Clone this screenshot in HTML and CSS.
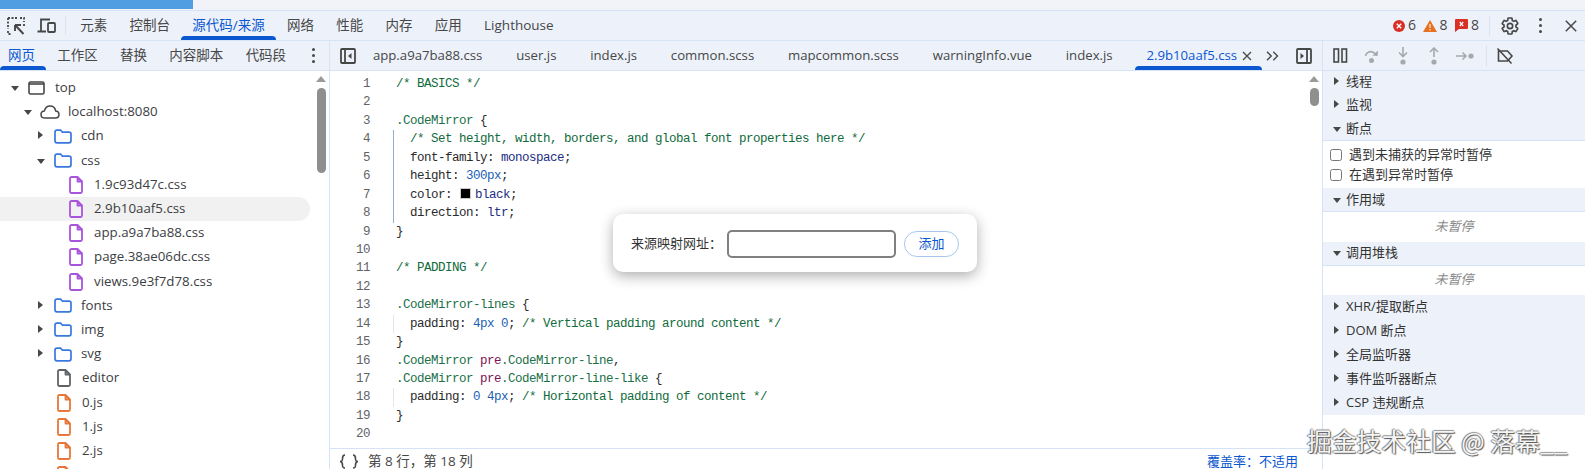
FILE: index.html
```html
<!DOCTYPE html>
<html lang="zh-CN">
<head>
<meta charset="utf-8">
<title>DevTools</title>
<link rel="stylesheet" href="styles.css">
</head>
<body>
<svg class="defs" width="0" height="0" aria-hidden="true">
  <symbol id="folder" viewBox="0 0 18 15"><path d="M1 3.2C1 2 1.8 1.2 3 1.2h3.6l1.8 2H15c1.2 0 2 .8 2 2v6.6c0 1.2-.8 2-2 2H3c-1.2 0-2-.8-2-2z" fill="none" stroke="#3a78e0" stroke-width="1.7"/></symbol>
  <symbol id="file" viewBox="0 0 14 18"><path d="M1 2.5C1 1.6 1.6 1 2.5 1H8.500L13 5.500V15.500C13 16.400 12.400 17 11.500 17H2.500C1.600 17 1 16.400 1 15.500Z M8.500 1V5.500H13" fill="none" stroke="currentColor" stroke-width="1.8" stroke-linejoin="round"/></symbol>
  <symbol id="panel" viewBox="0 0 16 16"><rect x="1" y="1" width="14" height="14" rx="1" fill="none" stroke="#474747" stroke-width="1.8"/></symbol>
</svg>

<div class="strip"><div class="progress"></div></div>

<header class="toolbar">
  <svg class="ico-inspect" width="18" height="18" viewBox="0 0 18 18"><path d="M1 1h9M1 1v11M1 14v3h4" fill="none" stroke="#474747" stroke-width="1.8" stroke-dasharray="2 1.5"/><path d="M13 1h4v4M17 7v2" fill="none" stroke="#474747" stroke-width="1.8" stroke-dasharray="2 1.5"/><path d="M8 8h6M8 8v6M8.5 8.500L16.500 17" fill="none" stroke="#474747" stroke-width="1.9"/></svg>
  <svg class="ico-device" width="19" height="16" viewBox="0 0 19 16"><path d="M4 13V1.500h9M0.500 13.500H9" fill="none" stroke="#474747" stroke-width="1.8"/><rect x="11" y="5" width="7" height="9" rx="1" fill="none" stroke="#474747" stroke-width="1.8"/></svg>
  <span class="vsep first"></span>
  <nav class="tabs main-tabs">
    <span class="tab">元素</span>
    <span class="tab">控制台</span>
    <span class="tab active">源代码/来源</span>
    <span class="tab">网络</span>
    <span class="tab">性能</span>
    <span class="tab">内存</span>
    <span class="tab">应用</span>
    <span class="tab">Lighthouse</span>
  </nav>
  <div class="status-icons">
    <svg width="12" height="12" viewBox="0 0 12 12"><circle cx="6" cy="6" r="6" fill="#d93025"/><path d="M3.800 3.800l4.400 4.400M8.200 3.800L3.800 8.200" stroke="#fff" stroke-width="1.4"/></svg><span class="count">6</span>
    <svg class="warn" width="14" height="12" viewBox="0 0 14 12"><path d="M7 0L14 12H0Z" fill="#e8711f"/><path d="M7 4v4M7 9v1.500" stroke="#fff" stroke-width="1"/></svg><span class="count">8</span>
    <svg class="issue" width="13" height="13" viewBox="0 0 13 13"><path d="M1 0H12a1 1 0 0 1 1 1V9a1 1 0 0 1-1 1H4L0 13V1a1 1 0 0 1 1-1Z" fill="#d93025"/><path d="M4.800 3l3.400 4M8.200 3L4.800 7" stroke="#fff" stroke-width="1.2"/></svg><span class="count">8</span>
    <span class="vsep second"></span>
    <svg class="gear" width="20" height="20" viewBox="0 0 24 24"><path d="M19.140 12.940c.04-.3.06-.61.06-.94 0-.32-.02-.64-.07-.94l2.030-1.580c.18-.14.23-.41.12-.61l-1.920-3.320c-.12-.22-.37-.29-.59-.22l-2.390.96c-.5-.38-1.030-.7-1.620-.94l-.36-2.540c-.04-.24-.24-.41-.48-.41h-3.840c-.24 0-.43.17-.47.41l-.36 2.540c-.59.24-1.130.57-1.620.94l-2.390-.96c-.22-.08-.47 0-.59.22L2.740 8.870c-.12.21-.08.47.12.61l2.030 1.580c-.05.3-.09.63-.09.94s.02.64.07.94l-2.030 1.580c-.18.14-.23.41-.12.61l1.920 3.320c.12.22.37.29.59.22l2.390-.96c.5.38 1.030.7 1.620.94l.36 2.540c.05.24.24.41.48.41h3.840c.24 0 .44-.17.47-.41l.36-2.540c.59-.24 1.130-.56 1.620-.94l2.390.96c.22.08.47 0 .59-.22l1.920-3.320c.12-.22.07-.47-.12-.61l-2.010-1.580z" fill="none" stroke="#474747" stroke-width="2"/><circle cx="12" cy="12" r="3.200" fill="none" stroke="#474747" stroke-width="2"/></svg>
    <span class="kebab"><i></i><i></i><i></i></span>
    <svg class="close" width="12" height="12" viewBox="0 0 12 12"><path d="M.8.800l10.400 10.400M11.200.8L.8 11.200" stroke="#474747" stroke-width="1.5"/></svg>
  </div>
</header>

<main class="columns">
  <section class="navigator">
    <div class="subbar left-bar">
      <nav class="tabs nav-tabs">
        <span class="tab active">网页</span>
        <span class="tab">工作区</span>
        <span class="tab">替换</span>
        <span class="tab">内容脚本</span>
        <span class="tab">代码段</span>
      </nav>
      <span class="kebab nav-kebab"><i></i><i></i><i></i></span>
    </div>
    <div class="tree-wrap">
      <div class="tree">
        <div class="row lv0"><span class="arrow down"></span><span class="slot"><svg width="17" height="14" viewBox="0 0 17 14"><rect x="1" y="1" width="15" height="12" rx="1.5" fill="none" stroke="#474747" stroke-width="1.6"/><path d="M1 3h15" stroke="#474747" stroke-width="1.6"/></svg></span>top</div>
        <div class="row lv1"><span class="arrow down"></span><span class="slot"><svg class="cloud" width="20" height="14" viewBox="0 0 20 14"><path d="M5 13C2.500 13 1 11.400 1 9.400 1 7.500 2.400 6 4.400 5.900 5.200 3 7.400 1 10 1c3 0 5.200 2.200 5.600 4.900C17.600 6 19 7.600 19 9.500 19 11.500 17.500 13 15.400 13Z" fill="none" stroke="#474747" stroke-width="1.5"/></svg></span>localhost:8080</div>
        <div class="row lv2"><span class="arrow right"></span><span class="slot"><svg width="18" height="15"><use href="#folder"/></svg></span>cdn</div>
        <div class="row lv2"><span class="arrow down"></span><span class="slot"><svg width="18" height="15"><use href="#folder"/></svg></span>css</div>
        <div class="row lv3 css"><span class="arrow"></span><span class="slot"><svg width="14" height="18"><use href="#file"/></svg></span>1.9c93d47c.css</div>
        <div class="row lv3 css selected"><span class="arrow"></span><span class="slot"><svg width="14" height="18"><use href="#file"/></svg></span>2.9b10aaf5.css</div>
        <div class="row lv3 css"><span class="arrow"></span><span class="slot"><svg width="14" height="18"><use href="#file"/></svg></span>app.a9a7ba88.css</div>
        <div class="row lv3 css"><span class="arrow"></span><span class="slot"><svg width="14" height="18"><use href="#file"/></svg></span>page.38ae06dc.css</div>
        <div class="row lv3 css"><span class="arrow"></span><span class="slot"><svg width="14" height="18"><use href="#file"/></svg></span>views.9e3f7d78.css</div>
        <div class="row lv2"><span class="arrow right"></span><span class="slot"><svg width="18" height="15"><use href="#folder"/></svg></span>fonts</div>
        <div class="row lv2"><span class="arrow right"></span><span class="slot"><svg width="18" height="15"><use href="#folder"/></svg></span>img</div>
        <div class="row lv2"><span class="arrow right"></span><span class="slot"><svg width="18" height="15"><use href="#folder"/></svg></span>svg</div>
        <div class="row lvf doc"><span class="arrow"></span><span class="slot"><svg width="14" height="18"><use href="#file"/></svg></span>editor</div>
        <div class="row lvf js"><span class="arrow"></span><span class="slot"><svg width="14" height="18"><use href="#file"/></svg></span>0.js</div>
        <div class="row lvf js"><span class="arrow"></span><span class="slot"><svg width="14" height="18"><use href="#file"/></svg></span>1.js</div>
        <div class="row lvf js"><span class="arrow"></span><span class="slot"><svg width="14" height="18"><use href="#file"/></svg></span>2.js</div>
        <div class="row lvf js"><span class="arrow"></span><span class="slot"><svg width="14" height="18"><use href="#file"/></svg></span></div>
      </div>
      <div class="scrollbar tree-scroll"><span class="up"></span><span class="thumb"></span></div>
    </div>
  </section>

  <section class="editor">
    <div class="subbar source-bar">
      <svg class="toggle" width="16" height="16"><use href="#panel"/></svg>
      <svg class="toggle-in" width="16" height="16" viewBox="0 0 16 16"><path d="M5 1v14" stroke="#474747" stroke-width="1.8"/><path d="M11.500 5v6L8 8Z" fill="#474747"/></svg>
      <nav class="tabs file-tabs">
        <span class="tab">app.a9a7ba88.css</span>
        <span class="tab">user.js</span>
        <span class="tab">index.js</span>
        <span class="tab">common.scss</span>
        <span class="tab">mapcommon.scss</span>
        <span class="tab">warningInfo.vue</span>
        <span class="tab">index.js</span>
        <span class="tab active">2.9b10aaf5.css<svg class="tab-x" width="10" height="10" viewBox="0 0 10 10"><path d="M1 1l8 8M9 1L1 9" stroke="#474747" stroke-width="1.3"/></svg></span>
      </nav>
      <svg class="more" width="13" height="10" viewBox="0 0 13 10"><path d="M1 .8L5.200 5 1 9.200M7.300.8L11.500 5 7.300 9.200" fill="none" stroke="#474747" stroke-width="1.4"/></svg>
      <svg class="toggle right-toggle" width="16" height="16"><use href="#panel"/></svg>
      <svg class="toggle-in right-in" width="16" height="16" viewBox="0 0 16 16"><path d="M11 1v14" stroke="#474747" stroke-width="1.8"/><path d="M4.500 5v6L8 8Z" fill="#474747"/></svg>
    </div>
    <div class="code-wrap">
      <div class="code">
        <div class="ln"><b>1</b><code><span class="c">/* BASICS */</span></code></div>
        <div class="ln"><b>2</b><code></code></div>
        <div class="ln"><b>3</b><code><span class="s">.CodeMirror</span> {</code></div>
        <div class="ln g"><b>4</b><code>  <span class="c">/* Set height, width, borders, and global font properties here */</span></code></div>
        <div class="ln g"><b>5</b><code>  font-family: <span class="v">monospace</span>;</code></div>
        <div class="ln g"><b>6</b><code>  height: <span class="n">300px</span>;</code></div>
        <div class="ln g"><b>7</b><code>  color: <span class="swatch"></span><span class="v">black</span>;</code></div>
        <div class="ln g"><b>8</b><code>  direction: <span class="v">ltr</span>;</code></div>
        <div class="ln"><b>9</b><code>}</code></div>
        <div class="ln"><b>10</b><code></code></div>
        <div class="ln"><b>11</b><code><span class="c">/* PADDING */</span></code></div>
        <div class="ln"><b>12</b><code></code></div>
        <div class="ln"><b>13</b><code><span class="s">.CodeMirror-lines</span> {</code></div>
        <div class="ln h"><b>14</b><code>  padding: <span class="n">4px 0</span>; <span class="c">/* Vertical padding around content */</span></code></div>
        <div class="ln"><b>15</b><code>}</code></div>
        <div class="ln"><b>16</b><code><span class="s">.CodeMirror</span> <span class="t">pre</span><span class="s">.CodeMirror-line</span>,</code></div>
        <div class="ln"><b>17</b><code><span class="s">.CodeMirror</span> <span class="t">pre</span><span class="s">.CodeMirror-line-like</span> {</code></div>
        <div class="ln h"><b>18</b><code>  padding: <span class="n">0 4px</span>; <span class="c">/* Horizontal padding of content */</span></code></div>
        <div class="ln"><b>19</b><code>}</code></div>
        <div class="ln"><b>20</b><code></code></div>
      </div>
      <div class="scrollbar code-scroll"><span class="up"></span><span class="thumb"></span></div>
    </div>
    <footer class="statusbar">
      <svg class="braces" width="20" height="15" viewBox="0 0 20 15"><path d="M6 1C3.500 1 3.500 2.500 3.500 4.500S3.500 7.500 1 7.500C3.500 7.500 3.500 9 3.500 11S3.500 14 6 14M14 1C16.500 1 16.500 2.500 16.500 4.500S16.500 7.500 19 7.500C16.500 7.500 16.500 9 16.500 11S16.500 14 14 14" fill="none" stroke="#474747" stroke-width="1.6"/></svg>
      <span>第 8 行，第 18 列</span>
      <span class="coverage">覆盖率：不适用</span>
    </footer>
  </section>

  <aside class="debugger">
    <div class="subbar debug-bar">
      <svg width="15" height="15" viewBox="0 0 15 15"><rect x="1" y="1" width="4.5" height="13" fill="none" stroke="#474747" stroke-width="1.6"/><rect x="9" y="1" width="4.5" height="13" fill="none" stroke="#474747" stroke-width="1.6"/></svg>
      <svg class="dbg over" width="16" height="16" viewBox="0 0 16 16"><path d="M1.500 8C2 4.500 6 2.500 9.500 4.500L13 7" fill="none" stroke="#a5a8ad" stroke-width="1.6"/><path d="M13.800 2.500V7.800H8.500Z" fill="#a5a8ad"/><circle cx="7.500" cy="12.500" r="2.500" fill="#a5a8ad"/></svg>
      <svg class="dbg into" width="12" height="18" viewBox="0 0 12 18"><path d="M6 0v9M2 5.500L6 9.500 10 5.500" fill="none" stroke="#a5a8ad" stroke-width="1.6"/><circle cx="6" cy="15" r="2.600" fill="#a5a8ad"/></svg>
      <svg class="dbg outof" width="12" height="18" viewBox="0 0 12 18"><path d="M6 10V1M2 5L6 1 10 5" fill="none" stroke="#a5a8ad" stroke-width="1.6"/><circle cx="6" cy="15" r="2.600" fill="#a5a8ad"/></svg>
      <svg class="dbg step" width="18" height="12" viewBox="0 0 18 12"><path d="M0 6h10M6.500 2.500L10 6 6.500 9.500" fill="none" stroke="#a5a8ad" stroke-width="1.5"/><circle cx="15" cy="6" r="2.600" fill="#a5a8ad"/></svg>
      <span class="vsep third"></span>
      <svg class="dbg off" width="19" height="18" viewBox="0 0 19 18"><path d="M1 9L5.500 4H14.500V14H5.500Z" fill="none" stroke="#474747" stroke-width="1.6" transform="matrix(-1 0 0 1 18 0)"/><path d="M2.500 1.500L16.500 16.500" stroke="#474747" stroke-width="1.6"/></svg>
    </div>
    <div class="sec"><span class="arrow right"></span>线程</div>
    <div class="sec"><span class="arrow right"></span>监视</div>
    <div class="sec open"><span class="arrow down"></span>断点</div>
    <div class="checks">
      <label class="check"><span class="box"></span>遇到未捕获的异常时暂停</label>
      <label class="check"><span class="box"></span>在遇到异常时暂停</label>
    </div>
    <div class="sec open"><span class="arrow down"></span>作用域</div>
    <div class="paused">未暂停</div>
    <div class="sec open"><span class="arrow down"></span>调用堆栈</div>
    <div class="paused">未暂停</div>
    <div class="sec"><span class="arrow right"></span>XHR/提取断点</div>
    <div class="sec"><span class="arrow right"></span>DOM 断点</div>
    <div class="sec"><span class="arrow right"></span>全局监听器</div>
    <div class="sec"><span class="arrow right"></span>事件监听器断点</div>
    <div class="sec"><span class="arrow right"></span>CSP 违规断点</div>
  </aside>
</main>

<div class="popup">
  <span class="popup-label">来源映射网址：</span>
  <span class="popup-input"></span>
  <span class="popup-btn">添加</span>
</div>

<div class="watermark">掘金技术社区 @ 落幕__</div>
</body>
</html>
```

FILE: styles.css
```css
* { box-sizing: border-box; }
html, body { margin: 0; height: 469px; overflow: hidden; }
body {
  position: relative;
  width: 1585px;
  background: #fff;
  color: #474747;
  font: 13.5px/1.2 "Open Sans", "Noto Sans CJK SC", sans-serif;
}
.defs { position: absolute; }

.strip { height: 10px; background: #f1f3f9; }
.progress { width: 193px; height: 9px; background: #519fe2; }

.toolbar {
  display: flex;
  align-items: center;
  height: 31px;
  background: #edf2fa;
  border-top: 1px solid #d6e2f5;
  border-bottom: 1px solid #d6e2f5;
  padding-left: 7px;
}
.ico-device { margin-left: 12px; margin-right: 9px; }
.vsep { width: 1px; height: 19px; background: #dde3ee; flex: none; }
.tabs { display: flex; align-items: stretch; height: 100%; }
.tab {
  position: relative;
  display: flex;
  align-items: center;
  white-space: nowrap;
}
.tab.active { color: #0b57d0; }
.tab.active::after {
  content: "";
  position: absolute;
  left: 0;
  right: 0;
  bottom: 0;
  height: 4px;
  border-radius: 4px 4px 0 0;
  background: #0b57d0;
}
.main-tabs { margin-left: 3px; }
.main-tabs .tab { padding: 0 11.15px; }

.status-icons {
  margin-left: auto;
  display: flex;
  align-items: center;
  height: 100%;
}
.count { margin-left: 2.5px; font-size: 14px; }
.warn { margin-left: 7px; }
.issue { margin-left: 8px; }
.vsep.second { margin-left: 10px; height: 20px; }
.gear { margin-left: 10px; }
.kebab { display: flex; flex-direction: column; gap: 3px; align-items: center; }
.kebab i { width: 3px; height: 3px; border-radius: 50%; background: #474747; display: block; }
.status-icons .kebab { margin-left: 19px; }
.close { margin-left: 23px; margin-right: 8px; }

.columns {
  display: grid;
  grid-template-columns: 330px 993px 1fr;
  height: 428px;
}
.subbar {
  display: flex;
  align-items: center;
  height: 30px;
  background: #edf2fa;
  border-bottom: 1px solid #d6e2f5;
}

.navigator { border-right: 1px solid #d6e2f5; min-width: 0; }
.nav-tabs .tab { padding: 0 11.15px; }
.nav-tabs .tab:first-child { padding-left: 8px; }
.nav-kebab { margin-left: 15px; }
.tree-wrap { display: flex; height: 398px; overflow: hidden; }
.tree { width: 310px; padding-top: 5px; flex: none; }
.row {
  display: flex;
  align-items: center;
  height: 24.2px;
  color: #3c4043;
  font-size: 13.3px;
  white-space: nowrap;
}
.row.lv0 { padding-left: 11px; }
.row.lv1 { padding-left: 24px; }
.row.lv2 { padding-left: 37px; }
.row.lv3 { padding-left: 52px; }
.row.lvf { padding-left: 40px; }
.row .arrow { width: 17px; }
.slot { width: 27px; display: flex; align-items: center; flex: none; }
.lv3 .slot, .lvf .slot { width: 25px; }
.cloud { margin-left: -1px; }
.css svg { color: #a855db; }
.doc svg { color: #5f6368; }
.js svg { color: #e8763a; }
.selected { background: #f1f1f1; border-radius: 0 12px 12px 0; }

.arrow { position: relative; flex: none; display: block; height: 10px; }
.arrow.down::before {
  content: "";
  position: absolute;
  left: 0;
  top: 3px;
  border-left: 4.5px solid transparent;
  border-right: 4.5px solid transparent;
  border-top: 5px solid #474747;
}
.arrow.right::before {
  content: "";
  position: absolute;
  left: 1px;
  top: 0;
  border-top: 4.5px solid transparent;
  border-bottom: 4.5px solid transparent;
  border-left: 5px solid #474747;
}

.scrollbar { display: flex; flex-direction: column; align-items: center; flex: none; padding-top: 5px; }
.tree-scroll { width: 19px; padding-left: 3px; }
.scrollbar .up {
  display: block;
  border-left: 5px solid transparent;
  border-right: 5px solid transparent;
  border-bottom: 6px solid #9a9a9a;
}
.scrollbar .thumb { display: block; width: 9px; margin-top: 6px; border-radius: 5px; background: #8f8f8f; }
.tree-scroll .thumb { height: 85px; }
.code-scroll { width: 16px; }
.code-scroll .thumb { height: 18px; }

.editor { min-width: 0; border-right: 1px solid #d6e2f5; display: flex; flex-direction: column; }
.source-bar { position: relative; }
.toggle { margin-left: 10px; flex: none; }
.toggle-in { margin-left: -16px; flex: none; }
.file-tabs .tab { padding: 0 16.9px; font-size: 13.2px; }
.file-tabs .tab.active { padding: 0 10px 0 11px; margin-left: 5.9px; }
.tab-x { margin-left: 5px; }
.more { margin-left: 4px; flex: none; }
.right-toggle { margin-left: auto; }
.right-in { margin-right: 10px; }

.code-wrap { flex: 1; display: flex; min-height: 0; }
.code { flex: 1; padding-top: 4px; min-width: 0; }
.ln {
  display: flex;
  height: 18.44px;
  font: 12.5px/18.44px "Liberation Mono", "DejaVu Sans Mono", monospace;
  letter-spacing: -0.5px;
  color: #2b2b2b;
}
.ln b {
  width: 40px;
  flex: none;
  font-weight: 400;
  text-align: right;
  color: #5f6368;
}
.ln code {
  font: inherit;
  margin-left: 23px;
  padding-left: 2px;
  border-left: 1px solid transparent;
  white-space: pre;
}
.ln.g code { border-left-color: #8fb0d6; }
.ln.h code { border-left-color: #e3e6ee; }
.c { color: #0f6b3c; }
.s { color: #1a7048; }
.v { color: #1b2d83; }
.n { color: #1a5fb4; }
.t { color: #7d1457; }
.swatch {
  display: inline-block;
  width: 11px;
  height: 11px;
  margin: 0 4px 0 1px;
  background: #000;
  border: 1px solid #ccc;
  vertical-align: -1px;
}

.statusbar {
  display: flex;
  align-items: center;
  gap: 9px;
  height: 21px;
  flex: none;
  padding: 5px 24px 0 9px;
  border-top: 1px solid #d6e2f5;
  font-size: 13.5px;
  white-space: nowrap;
}
.braces { flex: none; }
.coverage { margin-left: auto; color: #0b57d0; font-size: 13px; }

.debugger { min-width: 0; display: flex; flex-direction: column; }
.debug-bar { padding-left: 10px; }
.dbg.over { margin-left: 16px; }
.dbg.into { margin-left: 17px; }
.dbg.outof { margin-left: 19px; }
.dbg.step { margin-left: 16px; }
.vsep.third { margin-left: 12px; height: 22px; }
.dbg.off { margin-left: 8px; }
.sec {
  display: flex;
  align-items: center;
  height: 24px;
  background: #edf2fa;
  font-size: 13px;
  color: #333;
  padding-left: 10px;
  flex: none;
}
.debugger .subbar + .sec { height: 22px; }
.sec .arrow { width: 13px; }
.sec.open { border-bottom: 1px solid #d6e2f5; }
.checks { padding: 4px 0 3px; height: 47px; flex: none; }
.check { display: flex; align-items: center; height: 20px; font-size: 13px; padding-left: 7px; color: #333; }
.box {
  width: 12px;
  height: 12px;
  border: 1px solid #767676;
  border-radius: 2.5px;
  margin-right: 7px;
  flex: none;
}
.paused {
  height: 29.5px;
  flex: none;
  display: flex;
  align-items: center;
  justify-content: center;
  font-size: 13px;
  font-style: italic;
  color: #8a8a8a;
}

.popup {
  position: absolute;
  left: 613px;
  top: 214px;
  width: 364px;
  height: 58px;
  display: flex;
  align-items: center;
  padding: 2px 0 0 18px;
  background: #fff;
  border-radius: 10px;
  box-shadow: 0 4px 14px rgba(0, 0, 0, .32);
}
.popup-label { font-size: 13px; width: 96px; color: #333; flex: none; white-space: nowrap; }
.popup-input {
  width: 169px;
  height: 28px;
  border: 2px solid #808080;
  border-radius: 5px;
  flex: none;
}
.popup-btn {
  width: 55px;
  height: 26px;
  margin-left: 8px;
  border: 1px solid #a8c7f0;
  border-radius: 13px;
  color: #0b57d0;
  font-size: 13px;
  display: flex;
  align-items: center;
  justify-content: center;
  flex: none;
}

.watermark {
  position: absolute;
  left: 1307px;
  top: 425px;
  font: 24.8px/30px "Noto Sans CJK SC", sans-serif;
  color: #f4f4f4;
  white-space: nowrap;
  text-shadow: 1px 1px 1px #555, -1px 0 1px #777, 0 -1px 1px #999;
}
```
